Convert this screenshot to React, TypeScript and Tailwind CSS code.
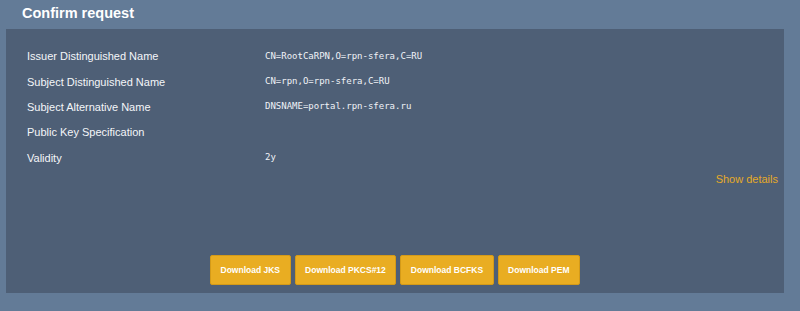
const rows: { label: string; value: string }[] = [
  { label: 'Issuer Distinguished Name', value: 'CN=RootCaRPN,O=rpn-sfera,C=RU' },
  { label: 'Subject Distinguished Name', value: 'CN=rpn,O=rpn-sfera,C=RU' },
  { label: 'Subject Alternative Name', value: 'DNSNAME=portal.rpn-sfera.ru' },
  { label: 'Public Key Specification', value: '' },
  { label: 'Validity', value: '2y' },
];

const downloads = ['Download JKS', 'Download PKCS#12', 'Download BCFKS', 'Download PEM'];

export default function App() {
  return (
    <div className="w-[800px] h-[311px] bg-[#637b97] flex flex-col font-['Liberation_Sans',Arial,sans-serif]">
      <h1 className="pl-[22px] pt-[3px] h-[29px] text-[14.5px] leading-[20px] font-bold text-white">
        Confirm request
      </h1>

      <div className="ml-[6px] mr-[16px] h-[264px] bg-[#4e5f76] flex flex-col">
        <div className="pt-[15px] pl-[21px]">
          {rows.map((row) => (
            <div key={row.label} className="flex items-center h-[25.3px]">
              <div className="w-[238px] text-[11px] text-[#f4f6f9]">{row.label}</div>
              <div className="text-[9px] text-[#f0f2f6] font-['DejaVu_Sans_Mono',monospace]">
                {row.value}
              </div>
            </div>
          ))}
        </div>

        <div className="flex justify-end pr-[6px] pt-[1px]">
          <a className="text-[11px] leading-[16px] text-[#e5aa28] cursor-pointer">Show details</a>
        </div>

        <div className="mt-auto pb-[8px] flex justify-center gap-[4px]">
          {downloads.map((label) => (
            <button
              key={label}
              className="h-[30px] px-[9.5px] bg-[#e9ad22] border border-[#d49a18] rounded-[2px] text-white text-[8.5px] font-bold"
            >
              {label}
            </button>
          ))}
        </div>
      </div>
    </div>
  );
}
